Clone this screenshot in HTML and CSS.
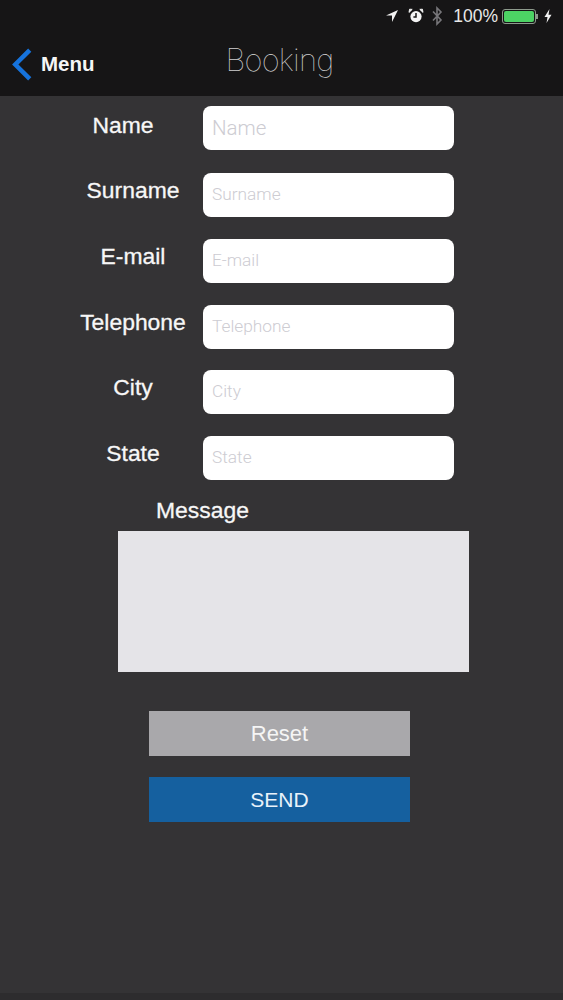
FILE: index.html
```html
<!DOCTYPE html>
<html lang="en">
<head>
<meta charset="utf-8">
<title>Booking</title>
<link rel="stylesheet" href="styles.css">
</head>
<body>
<div class="page">
  <header class="top">
    <div class="status">
      <svg class="ico-loc" viewBox="0 0 14 14"><path d="M13 1 1 6.6h6V13z" fill="#f2f2f2"/></svg>
      <svg class="ico-alarm" viewBox="0 0 16 16"><circle cx="8" cy="8.6" r="5.6" fill="#f4f4f4"/><path d="M1 4.4 4.2 1.4 1.6 1.2zM15 4.4 11.8 1.4 14.4 1.2z" fill="#f4f4f4" stroke="#f4f4f4"/><path d="M8 5v4H5.4" fill="none" stroke="#161516" stroke-width="1.5"/></svg>
      <svg class="ico-bt" viewBox="0 0 12 20"><path d="M2 5.5 10 14 6 18V2l4 4-8 8.500" fill="none" stroke="#77767a" stroke-width="1.600"/></svg>
      <span class="pct">100%</span>
      <span class="battery"><span class="battery-fill"></span></span>
      <span class="battery-tip"></span>
      <svg class="ico-bolt" viewBox="0 0 8 14"><path d="M5.500 0 .5 8h3L2.500 14l5-8.300h-3z" fill="#f2f2f2"/></svg>
    </div>
    <nav class="nav">
      <a class="back">
        <svg class="chev" viewBox="0 0 20 32"><path d="M17.500 2 3.500 16l14 14" fill="none" stroke="#1673dc" stroke-width="4.400"/></svg>
        <span>Menu</span>
      </a>
      <h1 class="title">Booking</h1>
    </nav>
  </header>
  <main class="form">
    <div class="row row-first"><label class="lbl lbl-name">Name</label><input class="field field-big" placeholder="Name"></div>
    <div class="row"><label class="lbl">Surname</label><input class="field" placeholder="Surname"></div>
    <div class="row"><label class="lbl">E-mail</label><input class="field" placeholder="E-mail"></div>
    <div class="row row-tight"><label class="lbl">Telephone</label><input class="field" placeholder="Telephone"></div>
    <div class="row"><label class="lbl">City</label><input class="field" placeholder="City"></div>
    <div class="row row-last"><label class="lbl">State</label><input class="field" placeholder="State"></div>
    <div class="msg-label">Message</div>
    <textarea class="msg"></textarea>
    <button class="btn btn-reset">Reset</button>
    <button class="btn btn-send">SEND</button>
  </main>
  <div class="bottom"></div>
</div>
</body>
</html>
```

FILE: styles.css
```css
* { box-sizing: border-box; }
html, body { margin: 0; padding: 0; }
body { background: #343335; font-family: "Liberation Sans", Arial, sans-serif; }
.page { width: 563px; height: 1000px; overflow: hidden; display: flex; flex-direction: column; background: #343335; }
.top { height: 96px; flex: none; background: #161516; display: flex; flex-direction: column; }
.status { height: 32px; display: flex; align-items: center; justify-content: flex-end; padding-right: 11px; color: #e8e8e8; font-size: 17.500px; }
.ico-loc { width: 14px; height: 14px; margin-right: 9px; }
.ico-alarm { width: 16px; height: 16px; margin-right: 7px; }
.ico-bt { width: 12px; height: 20px; margin-right: 10px; }
.pct { margin-right: 4px; }
.battery { width: 34px; height: 15px; border: 1px solid #8d9a8c; border-radius: 3px; padding: 1px; display: flex; }
.battery-fill { flex: 1; background: #4cd364; border-radius: 2px; }
.battery-tip { width: 2px; height: 5px; background: #8d9a8c; margin-right: 6px; }
.ico-bolt { width: 8px; height: 14px; }
.nav { flex: 1; display: flex; align-items: center; padding-left: 11px; position: relative; }
.back { display: flex; align-items: center; gap: 8px; color: #f5f5f5; font-size: 20.500px; font-weight: 700; }
.chev { width: 22px; height: 33px; }
.title { position: absolute; left: 0; right: 0; top: 9px; margin: 0; padding-right: 4px; text-align: center; font-family: Inter, sans-serif; font-weight: 100; font-size: 31px; letter-spacing: -.8px; color: #cfcfcf; }
.form { flex: 1; display: flex; flex-direction: column; align-items: flex-start; padding-top: 10px; }
.row { width: 454px; height: 44px; margin-bottom: 22px; display: flex; align-items: flex-start; }
.row-first { margin-bottom: 23px; }
.row-tight { margin-bottom: 21px; }
.row-last { margin-bottom: 0; }
.lbl { width: 140px; margin-left: 63px; height: 34px; line-height: 34px; text-align: center; color: #f7f7f7; font-size: 22.900px; white-space: nowrap; -webkit-text-stroke: .3px #f7f7f7; display: block; }
.lbl-name { height: 39px; line-height: 39px; padding-right: 20px; }
.field { width: 251px; height: 44px; border: 0; border-radius: 8px; background: #fff; padding: 0 9px 3px; font-family: Roboto, "Liberation Sans", sans-serif; font-weight: 300; font-size: 17.300px; outline: 0; }
.field::placeholder { color: #cdccd2; opacity: 1; }
.field-big { font-size: 20.500px; padding-bottom: 0; }
.msg-label { width: 405px; height: 51px; padding-top: 17px; line-height: 26px; text-align: center; color: #f7f7f7; font-size: 22.900px; -webkit-text-stroke: .3px #f7f7f7; }
.msg { display: block; margin: 0 0 39px 118px; width: 351px; height: 141px; border: 0; border-radius: 0; background: #e5e4e8; resize: none; outline: 0; padding: 0; }
.btn { display: block; margin: 0 0 21px 149px; width: 261px; height: 45px; border: 0; border-radius: 0; font-family: "Liberation Sans", sans-serif; font-size: 22px; padding: 0; color: #f5f5f5; }
.btn-reset { background: #a9a8ab; }
.btn-send { background: #15609f; color: #e8f2fa; font-size: 21px; }
.bottom { height: 7px; flex: none; background: #2d2c2e; }
```
